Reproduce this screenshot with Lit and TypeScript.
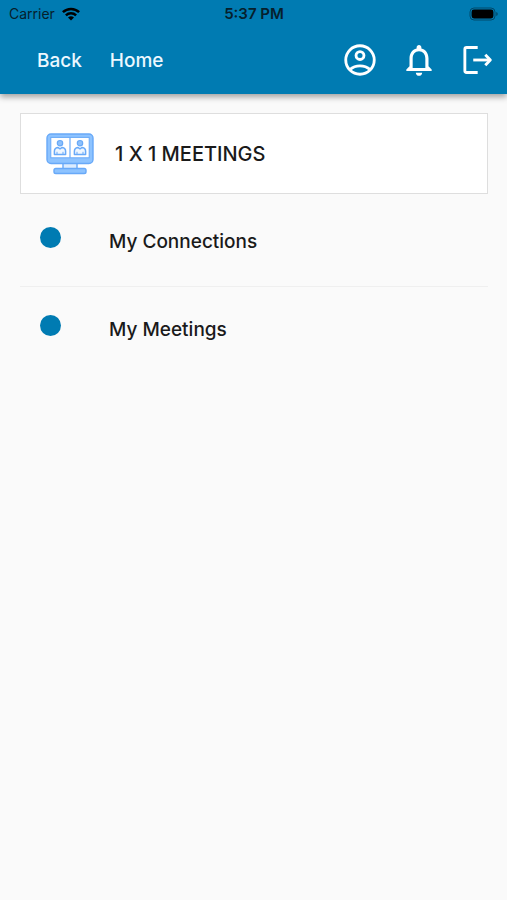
import { LitElement, html, css, svg } from "lit";
import { customElement } from "lit/decorators.js";

const wifiIcon = svg`<svg class="wifi" viewBox="0 0 18 14" aria-hidden="true">
  <g fill="none" stroke="currentColor" stroke-width="2.5">
    <path d="M0.9 5.2a11.6 11.6 0 0 1 16.2 0"/>
    <path d="M3.9 8.4a7.3 7.3 0 0 1 10.2 0"/>
  </g>
  <path fill="currentColor" d="M9 13.6 6 10.6a4.3 4.3 0 0 1 6 0z"/>
</svg>`;

const batteryIcon = svg`<svg class="battery" viewBox="0 0 30 14" aria-hidden="true">
  <rect x="1" y="1" width="25" height="12" rx="4" fill="none" stroke="currentColor" stroke-opacity="0.4"/>
  <rect x="2.6" y="2.6" width="21.8" height="8.8" rx="2.4" fill="currentColor"/>
  <path d="M27.4 5v4c1.6-.6 1.6-3.4 0-4z" fill="currentColor" opacity="0.5"/>
</svg>`;

const accountIcon = svg`<svg class="icon" viewBox="0 0 24 24" aria-hidden="true">
  <g fill="none" stroke="currentColor" stroke-width="1.8">
    <circle cx="12" cy="12" r="9"/>
    <circle cx="12" cy="9.2" r="2.5"/>
    <path d="M5.6 18.1c3.6-3.2 9.2-3.2 12.8 0"/>
  </g>
</svg>`;

const bellIcon = svg`<svg class="icon" viewBox="0 0 24 24" aria-hidden="true">
  <path fill="currentColor" d="M12 22c1.1 0 2-.9 2-2h-4c0 1.1.9 2 2 2zm6-6v-5c0-3.07-1.63-5.64-4.5-6.32V4c0-.83-.67-1.5-1.5-1.5s-1.5.67-1.5 1.5v.68C7.64 5.36 6 7.92 6 11v5l-2 2v1h16v-1l-2-2zm-2 1H8v-6c0-2.48 1.51-4.5 4-4.5s4 2.02 4 4.5v6z"/>
</svg>`;

const logoutIcon = svg`<svg class="icon" viewBox="0 0 24 24" aria-hidden="true">
  <g fill="none" stroke="currentColor" stroke-width="1.8" stroke-linejoin="round">
    <path d="M11.8 4.1H4.8a1.1 1.1 0 0 0-1.1 1.1v13.6a1.1 1.1 0 0 0 1.1 1.1h7"/>
    <path d="M9 12h10.6"/>
    <path d="M16.6 8.7 19.8 12l-3.2 3.3"/>
  </g>
</svg>`;

const attendee = (x: number) => svg`<g transform="translate(${x} 7)">
  <circle cx="6" cy="3.2" r="2.7" fill="#8dc0fb" stroke="#68a9f8" stroke-width="1.2"/>
  <path d="M0.4 14.4v-3.2Q0.4 7.8 3.8 7.4L6 8.8 8.2 7.4Q11.6 7.8 11.6 11.2V14.4z" fill="#eef6ff" stroke="#68a9f8" stroke-width="1.5" stroke-linejoin="round"/>
  <path d="M3 14.4v-2.6M9 14.4v-2.6" stroke="#68a9f8" stroke-width="1"/>
</g>`;

const meetingIcon = svg`<svg class="meeting" viewBox="0 0 48 42" aria-hidden="true">
  <g fill="#8dc3ff" stroke="#68a9f8" stroke-width="1.4">
    <path d="M17 30h14v6H17z" fill="#dcecff"/>
    <rect x="8" y="35.5" width="32" height="5" rx="1.8"/>
    <rect x="1" y="1" width="46" height="29.5" rx="4"/>
  </g>
  <rect x="4.8" y="4.4" width="38.4" height="20.4" fill="#fff" stroke="#68a9f8" stroke-width="1"/>
  <path d="M24 4.4v20.4" stroke="#68a9f8" stroke-width="1.2"/>
  ${attendee(8)}${attendee(28)}
</svg>`;

@customElement("app-root")
export class AppRoot extends LitElement {
  static styles = css`
    :host {
      display: block;
      min-height: 100vh;
      background: #fafafa;
      color: #1a1a1a;
      font-family: Inter, "Liberation Sans", sans-serif;
    }
    .header {
      background: #007bb2;
      box-shadow: 0 3px 6px rgba(0, 0, 0, 0.36);
    }
    .status {
      display: grid;
      grid-template-columns: 1fr auto 1fr;
      align-items: center;
      height: 27px;
      padding: 0 8px 0 9px;
      color: #06202c;
      font-size: 14px;
    }
    .carrier {
      display: flex;
      align-items: center;
      gap: 7px;
    }
    .time {
      font-size: 15px;
      font-weight: 600;
    }
    .wifi {
      width: 18px;
      height: 14px;
      color: #000;
    }
    .battery {
      justify-self: end;
      width: 30px;
      height: 14px;
      color: #000;
    }
    .nav {
      display: flex;
      align-items: center;
      justify-content: space-between;
      padding: 14px 10px 15px 37px;
    }
    .links,
    .actions {
      display: flex;
      align-items: center;
    }
    .links {
      gap: 28px;
    }
    .actions {
      gap: 21px;
    }
    button {
      display: flex;
      padding: 0;
      border: 0;
      background: none;
      color: #fff;
      font: inherit;
      cursor: pointer;
    }
    .link {
      color: #ecf8ff;
      font-size: 19px;
      font-weight: 500;
    }
    .icon {
      width: 38px;
      height: 38px;
    }
    .content {
      padding: 19px 19px 0 20px;
    }
    .title {
      display: flex;
      align-items: center;
      gap: 21px;
      height: 79px;
      padding: 0 25px;
      border: 1px solid #dedede;
      background: #fff;
    }
    .meeting {
      width: 48px;
      height: 42px;
    }
    h1 {
      margin: 0;
      font-size: 20px;
      font-weight: 500;
    }
    ul {
      margin: 0;
      padding: 0;
      list-style: none;
    }
    li + li {
      border-top: 1px solid #efefef;
    }
    .row {
      display: flex;
      align-items: flex-start;
      gap: 48px;
      padding: 33px 20px 29px;
      color: inherit;
      font-size: 19px;
      font-weight: 500;
      line-height: 30px;
      text-decoration: none;
    }
    li + li .row {
      padding-top: 28px;
    }
    .dot {
      width: 21px;
      height: 21px;
      border-radius: 50%;
      background: #007bb2;
    }
  `;

  render() {
    return html`
      <header class="header">
        <div class="status">
          <div class="carrier"><span>Carrier</span>${wifiIcon}</div>
          <div class="time">5:37 PM</div>
          ${batteryIcon}
        </div>
        <nav class="nav">
          <div class="links">
            <button class="link" type="button">Back</button>
            <button class="link" type="button">Home</button>
          </div>
          <div class="actions">
            <button type="button" aria-label="Profile">${accountIcon}</button>
            <button type="button" aria-label="Notifications">${bellIcon}</button>
            <button type="button" aria-label="Log out">${logoutIcon}</button>
          </div>
        </nav>
      </header>
      <main class="content">
        <div class="title">${meetingIcon}<h1>1 X 1 MEETINGS</h1></div>
        <ul>
          ${["My Connections", "My Meetings"].map(
            (label) => html`<li>
              <a class="row" href="#"><span class="dot"></span><span>${label}</span></a>
            </li>`
          )}
        </ul>
      </main>
    `;
  }
}
